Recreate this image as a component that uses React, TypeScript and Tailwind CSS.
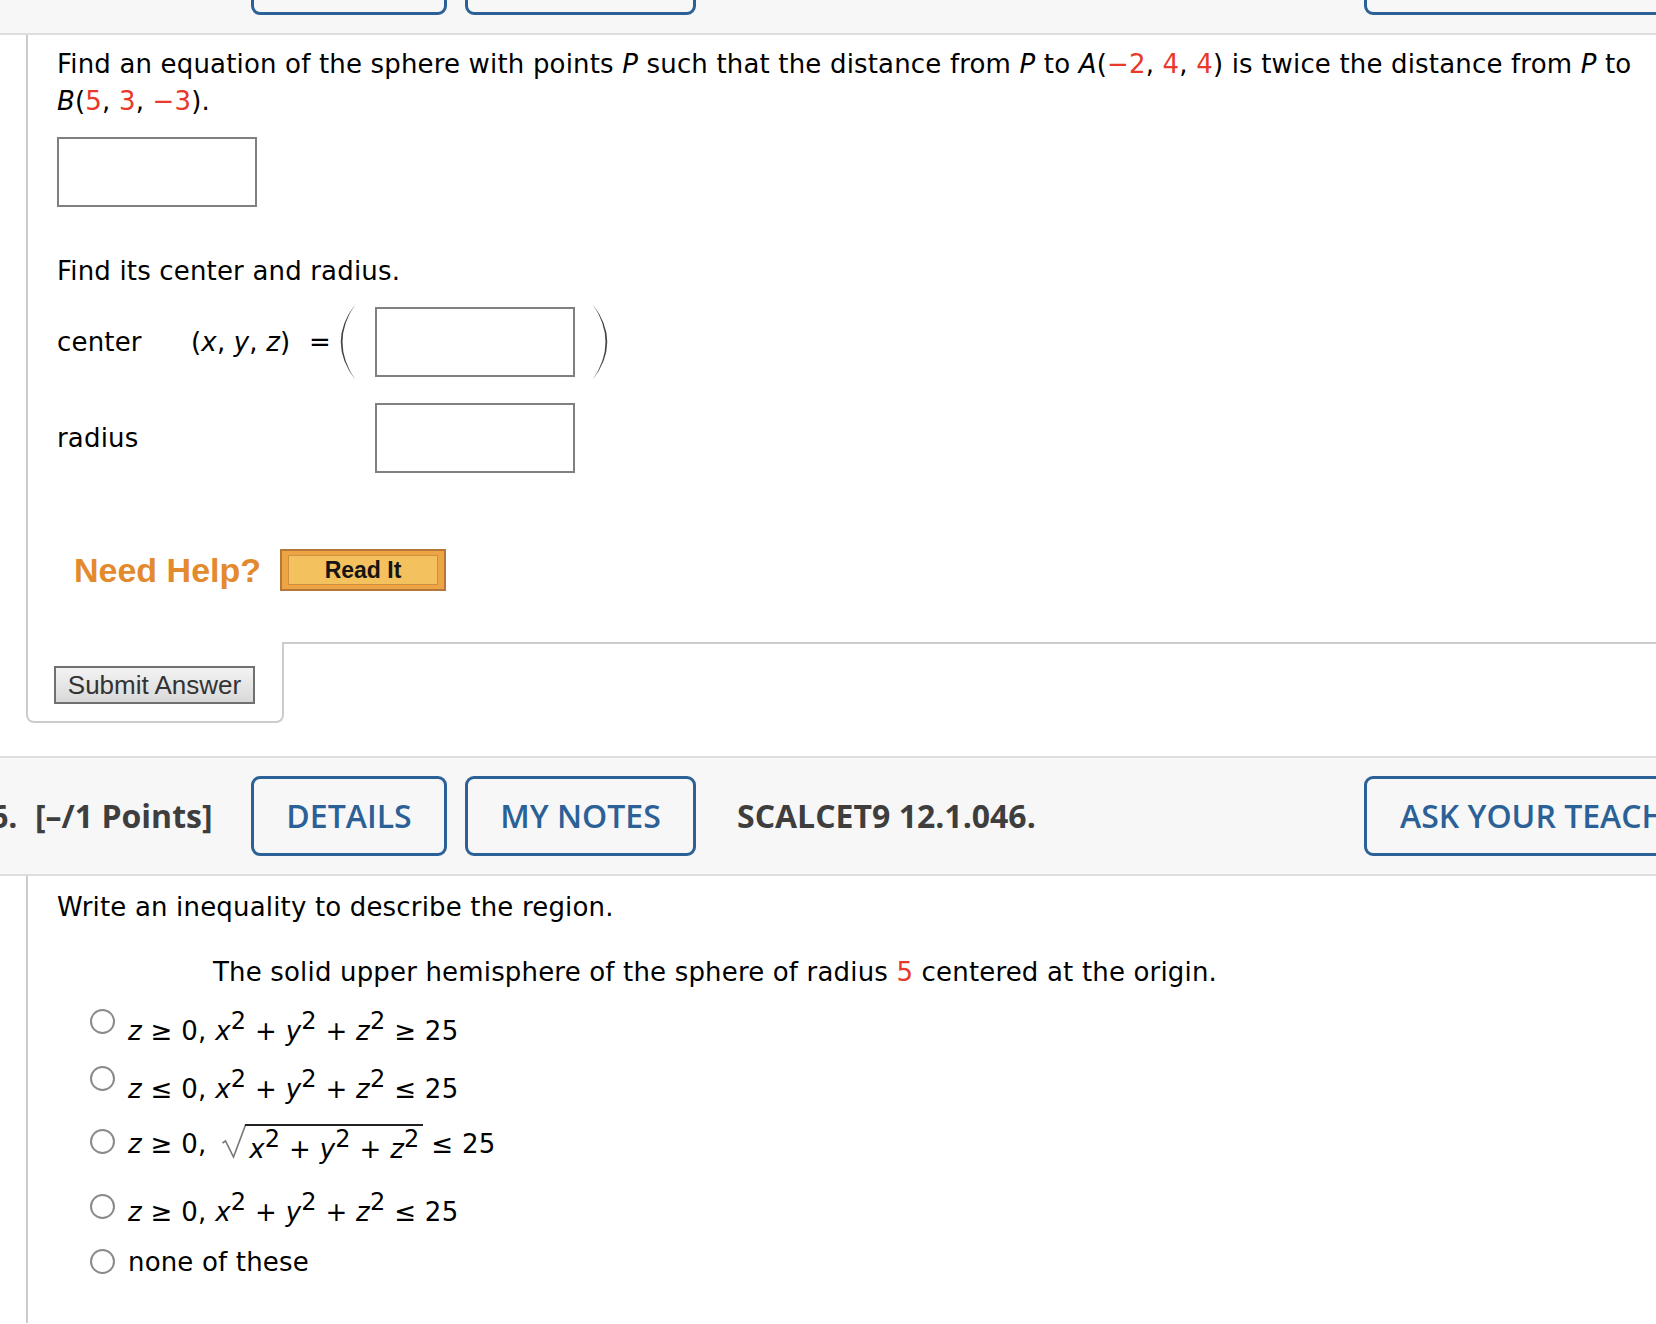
import React from "react";

const Red = ({ children }: { children: React.ReactNode }) => (
  <span className="text-[#e8392b]">{children}</span>
);

const Sup = ({ children }: { children: React.ReactNode }) => (
  <sup className="text-[24px] top-[-11px]">{children}</sup>
);

function Header({ num, code }: { num: string; code: string }) {
  return (
    <div className="h-[120px] shrink-0 border-y-2 border-[#dedede] bg-[#f7f7f7] flex items-center overflow-hidden whitespace-nowrap font-['Open_Sans',sans-serif] text-[32px] leading-none">
      <span className="shrink-0 ml-[-10px] w-[45px] font-bold text-[#3e3e3e]">{num}</span>
      <span className="shrink-0 w-[216px] font-bold text-[#3e3e3e]">[–/1 Points]</span>
      <div className="shrink-0 w-[196px] h-[80px] border-[3px] border-[#2b6196] rounded-[9px] flex items-center justify-center font-semibold text-[#2b6196]">
        DETAILS
      </div>
      <div className="shrink-0 ml-[18px] w-[231px] h-[80px] border-[3px] border-[#2b6196] rounded-[9px] flex items-center justify-center font-semibold text-[#2b6196]">
        MY NOTES
      </div>
      <span className="shrink-0 ml-[41px] w-[627px] font-bold text-[#3e3e3e]">{code}</span>
      <div className="shrink-0 h-[80px] border-[3px] border-[#2b6196] rounded-[9px] flex items-center px-[33px] font-semibold text-[#2b6196]">
        ASK YOUR TEACHER
      </div>
    </div>
  );
}

const AnswerBox = ({ className = "" }: { className?: string }) => (
  <div className={"shrink-0 w-[200px] h-[70px] border-2 border-[#808080] bg-white " + className} />
);

function Paren({ flip = false, className = "" }: { flip?: boolean; className?: string }) {
  return (
    <svg
      width="18"
      height="78"
      viewBox="0 0 18 78"
      className={"shrink-0 " + className}
      style={flip ? { transform: "scaleX(-1)" } : undefined}
    >
      <path d="M16.5 1 Q-13 39 16.5 77 Q-9.5 39 16.5 1 Z" fill="#444" />
    </svg>
  );
}

function Question1() {
  return (
    <>
      <div className="ml-[26px] border-l-2 border-[#cccccc] pl-[29px] pt-[11px] pb-[51px] font-['DejaVu_Sans',sans-serif] text-[26px] leading-[37px] tracking-[0.17px] text-black">
        <p className="whitespace-nowrap">
          Find an equation of the sphere with points <i>P</i> such that the distance from <i>P</i> to{" "}
          <i>A</i>(<Red>−2</Red>, <Red>4</Red>, <Red>4</Red>) is twice the distance from <i>P</i> to
          <br />
          <i>B</i>(<Red>5</Red>, <Red>3</Red>, <Red>−3</Red>).
        </p>
        <AnswerBox className="mt-[17px]" />
        <p className="mt-[46px]">Find its center and radius.</p>
        <div className="mt-[13px] flex items-center h-[78px]">
          <span className="shrink-0 w-[134px]">center</span>
          <span className="shrink-0 w-[118px]">
            (<i>x</i>, <i>y</i>, <i>z</i>)
          </span>
          <span className="shrink-0 w-[22px]">=</span>
          <Paren className="ml-[8px]" />
          <AnswerBox className="ml-[18px]" />
          <Paren flip className="ml-[16px]" />
        </div>
        <div className="mt-[22px] flex items-center h-[70px]">
          <span className="shrink-0 w-[318px]">radius</span>
          <AnswerBox />
        </div>
        <div className="mt-[76px] flex items-center h-[42px]">
          <span className="shrink-0 ml-[17px] w-[206px] font-['Liberation_Sans',Arial,sans-serif] font-bold text-[34px] leading-none text-[#e38a2e] tracking-normal">
            Need Help?
          </span>
          <div className="shrink-0 w-[166px] h-[42px] border-2 border-[#b5773a] bg-[#eca445] px-[6px] py-[4px]">
            <div className="h-full border border-[#d08f3c] bg-[#f3c15e] flex items-center justify-center font-['Liberation_Sans',Arial,sans-serif] font-bold text-[23px] leading-none text-[#151515] tracking-normal">
              Read It
            </div>
          </div>
        </div>
      </div>
      <div className="flex">
        <div className="shrink-0 ml-[26px] w-[258px] border-2 border-t-0 border-[#cccccc] rounded-b-[8px] pl-[26px] pt-[24px] pb-[17px]">
          <div className="w-[201px] h-[38px] border-2 border-[#707070] bg-linear-to-b from-[#f3f3f3] to-[#d9d9d9] flex items-center justify-center font-['Liberation_Sans',Arial,sans-serif] text-[26px] leading-none text-[#333333]">
            Submit Answer
          </div>
        </div>
        <div className="flex-1 border-t-2 border-[#cccccc]" />
      </div>
    </>
  );
}

const Radio = ({ mt }: { mt: string }) => (
  <span className={"block shrink-0 w-[25px] h-[25px] rounded-full border-2 border-[#8a8a8a] bg-white " + mt} />
);

function Question2() {
  return (
    <div className="ml-[26px] border-l-2 border-[#cccccc] pl-[29px] pt-[13px] pb-[46px] font-['DejaVu_Sans',sans-serif] text-[26px] leading-[37px] tracking-[0.17px] text-black">
      <p>Write an inequality to describe the region.</p>
      <p className="mt-[28px] pl-[156px]">
        The solid upper hemisphere of the sphere of radius <Red>5</Red> centered at the origin.
      </p>
      <div className="mt-[16px] pl-[33px] flex flex-col leading-[30px] tracking-[0.3px]">
        <div className="flex items-start h-[57px]">
          <Radio mt="mt-[2px]" />
          <div className="ml-[13px] mt-[9px] whitespace-nowrap">
            <i>z</i> ≥ 0, <i>x</i>
            <Sup>2</Sup> + <i>y</i>
            <Sup>2</Sup> + <i>z</i>
            <Sup>2</Sup> ≥ 25
          </div>
        </div>
        <div className="flex items-start h-[53px]">
          <Radio mt="mt-[2px]" />
          <div className="ml-[13px] mt-[10px] whitespace-nowrap">
            <i>z</i> ≤ 0, <i>x</i>
            <Sup>2</Sup> + <i>y</i>
            <Sup>2</Sup> + <i>z</i>
            <Sup>2</Sup> ≤ 25
          </div>
        </div>
        <div className="flex items-start h-[74px]">
          <Radio mt="mt-[12px]" />
          <div className="ml-[13px] whitespace-nowrap">
            <i>z</i> ≥ 0,{" "}
            <svg
              width="24"
              height="36"
              viewBox="0 0 24 36"
              className="inline-block align-baseline relative top-[7px] ml-[7px]"
            >
              <path d="M0.5 19 L3.5 17 L11.5 33 L23.5 1" stroke="#777" strokeWidth="1.6" fill="none" />
            </svg>
            <span className="inline-block align-baseline relative top-[5px] ml-[-1px] border-t-2 border-[#222] pt-[8px] pl-[4px] pr-[3px] leading-[30px]">
              <i>x</i>
              <Sup>2</Sup> + <i>y</i>
              <Sup>2</Sup> + <i>z</i>
              <Sup>2</Sup>
            </span>{" "}
            ≤ 25
          </div>
        </div>
        <div className="flex items-start h-[56px]">
          <Radio mt="mt-[3px]" />
          <div className="ml-[13px] mt-[6px] whitespace-nowrap">
            <i>z</i> ≥ 0, <i>x</i>
            <Sup>2</Sup> + <i>y</i>
            <Sup>2</Sup> + <i>z</i>
            <Sup>2</Sup> ≤ 25
          </div>
        </div>
        <div className="flex items-start">
          <Radio mt="mt-[2px]" />
          <div className="ml-[13px] whitespace-nowrap tracking-[0.17px]">none of these</div>
        </div>
      </div>
    </div>
  );
}

export default function App() {
  return (
    <div className="flex flex-col w-full overflow-hidden bg-white">
      <div className="mt-[-85px]">
        <Header num="5." code="SCALCET9 12.1.045." />
      </div>
      <Question1 />
      <div className="mt-[33px]">
        <Header num="6." code="SCALCET9 12.1.046." />
      </div>
      <Question2 />
    </div>
  );
}
